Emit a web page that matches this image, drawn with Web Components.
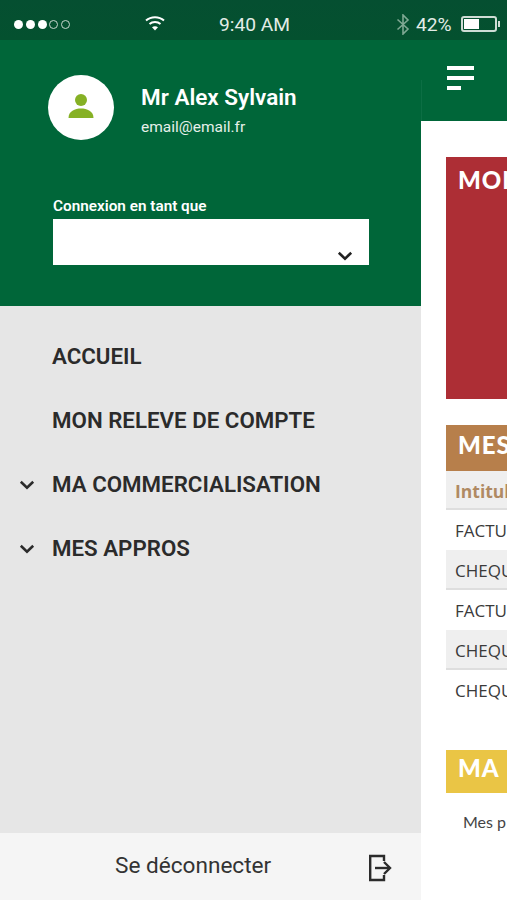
<!DOCTYPE html>
<html lang="fr">
<head>
<meta charset="utf-8">
<title>Menu</title>
<style>
    html, body { margin: 0; height: 100%; }
    body { font-family: Roboto, "Liberation Sans", sans-serif; background: #fff; overflow: hidden; }
</style>
</head>
<body>
<app-screen>
    <status-bar></status-bar>
    <side-drawer>
        <user-header name="Mr Alex Sylvain" email="email@email.fr" label="Connexion en tant que"></user-header>
        <nav-item>ACCUEIL</nav-item>
        <nav-item>MON RELEVE DE COMPTE</nav-item>
        <nav-item expandable>MA COMMERCIALISATION</nav-item>
        <nav-item expandable>MES APPROS</nav-item>
        <drawer-footer>Se déconnecter</drawer-footer>
    </side-drawer>
    <page-peek>
        <peek-card color="#ad2e35" height="242" title="MON"></peek-card>
        <peek-table title="MES" head="Intitulé" rows="FACTURE,CHEQUE,FACTURE,CHEQUE,CHEQUE"></peek-table>
        <peek-card color="#eac545" height="43" title="MA" note="Mes p"></peek-card>
    </page-peek>
</app-screen>

<script>
const chevron = `<svg viewBox="0 0 16 10" fill="none" stroke="currentColor" stroke-width="2.6"><path d="M1.8 1.8 8 7.6 14.2 1.8"/></svg>`

class AppScreen extends HTMLElement {
    constructor() {
        super()
        this.attachShadow({ mode: 'open' }).innerHTML = `
            <style>
                :host{
                    display:grid;
                    grid-template-columns:421px 86px;
                    grid-template-rows:40px 860px;
                    width:507px;
                    height:900px;
                    overflow:hidden;
                }
                ::slotted(status-bar){ grid-column:1 / 3; }
            </style>
            <slot></slot>
        `
    }
}

class StatusBar extends HTMLElement {
    constructor() {
        super()
        this.attachShadow({ mode: 'open' }).innerHTML = `
            <style>
                :host{
                    display:flex;
                    align-items:center;
                    height:40px;
                    background:linear-gradient(#054f31,#04512f);
                    color:#e3ece7;
                    font:19.2px Roboto, "Liberation Sans", sans-serif;
                    padding:8px 0 0 14px;
                    box-sizing:border-box;
                }
                .dots{ display:flex; gap:2.75px; width:131px; }
                .dots i{ width:9px; height:9px; border-radius:50%; background:#fff; box-sizing:border-box; }
                .dots i.off{ background:none; border:1px solid #c6d6cd; }
                .wifi{ width:22px; height:18px; margin:-2px 0 0 -1px; }
                .time{ margin-left:53px; width:183px; }
                .bt{ width:14px; height:21px; margin-left:-6px; }
                .pct{ margin-left:6px; }
                .batt{ display:flex; align-items:center; margin-left:9px; }
                .cell{ width:36px; height:16px; border:2px solid #cfdcd5; border-radius:3px; box-sizing:border-box; padding:1px; }
                .cell b{ display:block; width:15px; height:100%; background:#fff; }
                .nub{ width:2px; height:6px; background:#cfdcd5; margin-left:1px; }
            </style>
            <span class="dots"><i></i><i></i><i></i><i class="off"></i><i class="off"></i></span>
            <svg class="wifi" viewBox="0 0 22 18" fill="none" stroke="#fff" stroke-width="2">
                <path d="M2 6.5C7 2 15 2 20 6.5"/><path d="M5.5 10C8.5 7.4 13.5 7.4 16.5 10"/>
                <path d="M11 16.5 8 13.2C9.6 11.8 12.4 11.8 14 13.2Z" fill="#fff" stroke="none"/>
            </svg>
            <span class="time">9:40 AM</span>
            <svg class="bt" viewBox="0 0 14 21" fill="none" stroke="#7fa893" stroke-width="1.6"><path d="M1.5 5.5 12 15 7 20V1l5 5L1.5 15.5"/></svg>
            <span class="pct">42%</span>
            <span class="batt"><span class="cell"><b></b></span><span class="nub"></span></span>
        `
    }
}

class SideDrawer extends HTMLElement {
    constructor() {
        super()
        this.attachShadow({ mode: 'open' }).innerHTML = `
            <style>
                :host{
                    display:flex;
                    flex-direction:column;
                    height:860px;
                    background:#e6e6e6;
                }
            </style>
            <slot></slot>
        `
    }
}

class UserHeader extends HTMLElement {
    constructor() {
        super()
        this.attachShadow({ mode: 'open' }).innerHTML = `
            <style>
                :host{
                    display:block;
                    height:266px;
                    margin-bottom:18px;
                    background:#006639;
                    color:#fff;
                    box-sizing:border-box;
                    padding:35px 52px 0 53px;
                    font-family:Roboto, "Liberation Sans", sans-serif;
                }
                .user{ display:flex; align-items:center; margin-left:-5px; }
                .avatar{
                    width:66px; height:65px; border-radius:50%; background:#fff;
                    display:flex; align-items:center; justify-content:center;
                    margin-right:27px;
                }
                .avatar svg{ width:26px; height:26px; margin-top:-3px; }
                .name{ font-size:22.5px; font-weight:600; line-height:26px; margin-top:5px; }
                .email{ font-size:15.5px; line-height:18px; margin-top:8px; color:#e6f0ea; }
                label{ display:block; font-size:15.3px; font-weight:600; line-height:18px; margin-top:57px; }
                .select{
                    display:flex; align-items:flex-end; justify-content:flex-end;
                    height:46px; margin-top:4px; background:#fff; color:#222;
                    padding:0 16px 4px 0; box-sizing:border-box;
                }
                .select svg{ width:16px; height:10px; }
            </style>
            <div class="user">
                <div class="avatar">
                    <svg viewBox="0 0 26 26" fill="#86b125"><circle cx="13" cy="7" r="6"/><path d="M0.500 25C0.500 18 7 15.500 13 15.500S25.500 18 25.500 25Z"/></svg>
                </div>
                <div>
                    <div class="name">${this.getAttribute('name')}</div>
                    <div class="email">${this.getAttribute('email')}</div>
                </div>
            </div>
            <label>${this.getAttribute('label')}</label>
            <div class="select">${chevron}</div>
        `
    }
}

class NavItem extends HTMLElement {
    constructor() {
        super()
        this.attachShadow({ mode: 'open' }).innerHTML = `
            <style>
                :host{
                    display:flex;
                    align-items:center;
                    height:64px;
                    color:#2b2b2b;
                    font:600 22.3px Roboto, "Liberation Sans", sans-serif;
                    padding-left:52px;
                    position:relative;
                }
                svg{ position:absolute; left:19px; top:28px; width:16px; height:10px; }
            </style>
            ${this.hasAttribute('expandable') ? chevron : ''}
            <slot></slot>
        `
    }
}

class DrawerFooter extends HTMLElement {
    constructor() {
        super()
        this.attachShadow({ mode: 'open' }).innerHTML = `
            <style>
                :host{
                    display:flex;
                    align-items:center;
                    margin-top:auto;
                    height:67px;
                    background:#f5f5f5;
                    color:#333;
                    font:22.6px Roboto, "Liberation Sans", sans-serif;
                    padding:0 28px 3px 115px;
                    box-sizing:border-box;
                }
                span{ flex:1; }
                svg{ width:24px; height:28px; margin-top:5px; margin-right:1px; }
            </style>
            <span><slot></slot></span>
            <svg viewBox="0 0 24 28" fill="none" stroke="#2b2b2b" stroke-width="2.400">
                <path d="M16 7V2H2.200V26H16V21"/><path d="M7 14H22"/><path d="M16 8 22 14 16 20"/>
            </svg>
        `
    }
}

class PagePeek extends HTMLElement {
    constructor() {
        super()
        this.attachShadow({ mode: 'open' }).innerHTML = `
            <style>
                :host{ display:block; height:860px; background:#fff; overflow:hidden; }
                .bar{
                    height:81px; background:#006639;
                    box-sizing:border-box; padding:26px 0 0 26px;
                    background-image:linear-gradient(#0c6e44,#0c6e44);
                    background-repeat:no-repeat;
                    background-size:1px 41px;
                    background-position:0 40px;
                }
                .bar i{ display:block; height:3.5px; background:#fff; margin-bottom:6.5px; }
                .bar i:nth-child(1){ width:27px; }
                .bar i:nth-child(2){ width:27px; }
                .bar i:nth-child(3){ width:14px; }
                .body{ display:flex; flex-direction:column; gap:26px; padding:36px 0 0 25px; }
            </style>
            <div class="bar"><i></i><i></i><i></i></div>
            <div class="body"><slot></slot></div>
        `
    }
}

class PeekCard extends HTMLElement {
    constructor() {
        super()
        const note = this.getAttribute('note')
        const height = this.getAttribute('height')
        this.attachShadow({ mode: 'open' }).innerHTML = `
            <style>
                :host{ display:block; white-space:nowrap; overflow:hidden; font-family:Lato, "Open Sans", sans-serif; }
                :host(:last-child){ margin-top:14px; }
                .head{
                    height:${height}px;
                    background:${this.getAttribute('color')};
                    color:#fff;
                    font-size:24px; font-weight:900; letter-spacing:1px;
                    line-height:${height > 100 ? 46 : 36}px;
                    padding-left:12px;
                }
                .note{ font-size:16px; color:#444; margin:19px 0 0 17px; line-height:20px; }
            </style>
            <div class="head">${this.getAttribute('title')}</div>
            ${note ? `<div class="note">${note}</div>` : ''}
        `
    }
}

class PeekTable extends HTMLElement {
    constructor() {
        super()
        const rows = this.getAttribute('rows').split(',')
            .map((r, i) => `<div class="row ${i % 2 ? 'alt' : ''}">${r}</div>`).join('')
        this.attachShadow({ mode: 'open' }).innerHTML = `
            <style>
                :host{ display:block; white-space:nowrap; overflow:hidden; font-family:"Open Sans", Lato, sans-serif; }
                .head{
                    height:46px; background:#b77f4b; color:#fff;
                    font:900 24px/39px Lato, sans-serif; letter-spacing:1px;
                    padding-left:12px;
                }
                .row{
                    height:40px; box-sizing:border-box; line-height:41px;
                    padding-left:9px; font-size:17px; color:#3a3a3a;
                }
                .alt{ background:#efefef; border-bottom:2px solid #dedede; }
                .title{
                    height:39px; line-height:40px; background:#efefef; border-bottom:2px solid #dedede;
                    box-sizing:border-box; padding-left:9px;
                    font-size:17.5px; font-weight:700; color:#b08a63;
                }
            </style>
            <div class="head">${this.getAttribute('title')}</div>
            <div class="title">${this.getAttribute('head')}</div>
            ${rows}
        `
    }
}

customElements.define('app-screen', AppScreen)
customElements.define('status-bar', StatusBar)
customElements.define('side-drawer', SideDrawer)
customElements.define('user-header', UserHeader)
customElements.define('nav-item', NavItem)
customElements.define('drawer-footer', DrawerFooter)
customElements.define('page-peek', PagePeek)
customElements.define('peek-card', PeekCard)
customElements.define('peek-table', PeekTable)
</script>
</body>
</html>
